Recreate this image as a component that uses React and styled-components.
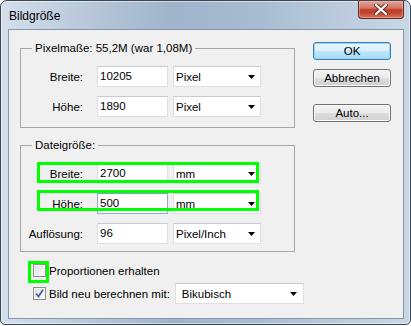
import React from "react";
import styled, { createGlobalStyle } from "styled-components";

const GlobalStyle = createGlobalStyle`
  html, body { margin: 0; padding: 0; background: #ffffff; }
  body { font-family: "Liberation Sans", Arial, sans-serif; font-size: 11.5px; color: #000; }
  * { box-sizing: border-box; }
`;

const Window = styled.div`
  width: 411px;
  height: 325px;
  border: 1px solid #3b4656;
  border-radius: 7px 7px 5px 5px;
  background: linear-gradient(90deg, #d3dfeb 0%, #bccbdc 18%, #9fb3ca 42%, #a7bbd1 62%, #bdcddd 85%, #c9d7e5 100%);
  box-shadow: inset 0 0 0 1px rgba(255, 255, 255, 0.5);
  display: flex;
  flex-direction: column;
  padding: 0 6px 5px 7px;
`;

const TitleBar = styled.div`
  height: 28px;
  display: flex;
  align-items: flex-start;
  justify-content: space-between;
`;

const Title = styled.div`
  padding: 8px 0 0 1px;
  font-size: 12px;
  line-height: 14px;
  color: #000;
`;

const CloseButton = styled.div`
  width: 46px;
  height: 18px;
  border: 1px solid #5c2a26;
  border-top: none;
  border-radius: 0 0 4px 4px;
  background: linear-gradient(180deg, #e3a597 0%, #d27462 42%, #bf3a2b 52%, #c4452f 72%, #d8775c 100%);
  box-shadow: inset 0 0 0 1px rgba(255, 190, 175, 0.5);
  display: flex;
  align-items: center;
  justify-content: center;
`;

const Client = styled.div`
  width: 396px;
  height: 290px;
  border: 1px solid #8496ab;
  background: #f0f0f0;
  display: flex;
`;

const LeftCol = styled.div`
  width: 286px;
  flex-shrink: 0;
  padding: 18px 0 0 11px;
  display: flex;
  flex-direction: column;
`;

const Group = styled.div`
  position: relative;
  width: 275px;
  border: 1px solid #a7a7a7;
  padding: 17px 0 ${(p) => p.$bottom}px 0;
  margin-top: ${(p) => p.$top}px;
  display: flex;
  flex-direction: column;
  gap: 9px;
`;

const Legend = styled.div`
  position: absolute;
  top: -8px;
  left: 11px;
  padding: 0 3px;
  background: #f0f0f0;
  line-height: 14px;
`;

const Row = styled.div`
  position: relative;
  display: flex;
  align-items: center;
  height: 21px;
`;

const Label = styled.div`
  width: 62px;
  margin-right: 14px;
  text-align: right;
  white-space: nowrap;
`;

const Field = styled.div`
  width: 71px;
  height: 21px;
  background: #fff;
  border: 1px solid ${(p) => (p.$focused ? "#8eaed3" : "#dcdfe4")};
  border-top-color: ${(p) => (p.$focused ? "#7f9fc6" : "#c8cbd0")};
  padding-left: 2px;
  line-height: 19px;
  margin-right: 5px;
`;

const Select = styled.div`
  width: ${(p) => p.$w}px;
  flex-shrink: 0;
  height: 21px;
  background: #fff;
  border: 1px solid #dcdfe4;
  border-top-color: #c8cbd0;
  display: flex;
  align-items: center;
  justify-content: space-between;
  padding: 0 ${(p) => p.$pr}px 0 ${(p) => p.$pl}px;
`;

const Highlight = styled.div`
  position: absolute;
  border: 3px solid #00ff00;
  pointer-events: none;
`;

const CheckRow = styled.div`
  display: flex;
  align-items: center;
  height: 21px;
  padding-left: 13px;
  margin-top: ${(p) => p.$top}px;
`;

const CheckWrap = styled.div`
  position: relative;
  flex-shrink: 0;
  width: 13px;
  height: 13px;
  margin-right: 3px;
`;

const Box = styled.div`
  width: 13px;
  height: 13px;
  border: 1px solid #8e8f8f;
  background: linear-gradient(135deg, #dcdcdc 0%, #f4f4f4 70%, #fdfdfd 100%);
  box-shadow: inset 0 0 0 1px #f4f4f4;
  display: flex;
  align-items: center;
  justify-content: center;
`;

const CheckText = styled.div`
  white-space: nowrap;
  flex-shrink: 0;
  margin-right: 5px;
`;

const RightCol = styled.div`
  margin-left: 18px;
  padding-top: 12px;
  display: flex;
  flex-direction: column;
`;

const Button = styled.div`
  width: 78px;
  height: 18px;
  margin-top: ${(p) => p.$top}px;
  border: 1px solid ${(p) => (p.$default ? "#3c7fb1" : "#707070")};
  border-radius: 3px;
  background: ${(p) =>
    p.$default
      ? "linear-gradient(180deg, #eaf6fd 0%, #d9f0fc 50%, #bee6fd 51%, #a7d9f5 100%)"
      : "linear-gradient(180deg, #f2f2f2 0%, #ebebeb 50%, #dddddd 51%, #cfcfcf 100%)"};
  box-shadow: inset 0 0 0 1px ${(p) => (p.$default ? "#94d6f7" : "#fcfcfc")};
  display: flex;
  align-items: center;
  justify-content: center;
  line-height: 14px;
`;

const Arrow = () => (
  <svg width="7" height="4" viewBox="0 0 7 4">
    <path d="M0 0 H7 L3.5 4 Z" fill="#000" />
  </svg>
);

const CloseX = () => (
  <svg width="14" height="11" viewBox="0 0 14 11">
    <path d="M2 1 L12 10 M12 1 L2 10" stroke="#6a2a22" strokeWidth="4" strokeLinecap="square" />
    <path d="M2 1 L12 10 M12 1 L2 10" stroke="#ffffff" strokeWidth="2.2" strokeLinecap="square" />
  </svg>
);

const CheckMark = () => (
  <svg width="9" height="9" viewBox="0 0 9 9">
    <path d="M1 4.5 L3.5 7.5 L8 0.8" fill="none" stroke="#4a5f97" strokeWidth="1.8" />
  </svg>
);

function FormRow({ label, value, unit, focused, highlight }) {
  return (
    <Row>
      <Label>{label}</Label>
      <Field $focused={focused}>{value}</Field>
      <Select $w={88} $pl={2} $pr={5}>
        <span>{unit}</span>
        <Arrow />
      </Select>
      {highlight && (
        <Highlight style={{ left: 16, top: highlight.top, width: 222, height: 21 }} />
      )}
    </Row>
  );
}

export default function App() {
  return (
    <>
      <GlobalStyle />
      <Window>
        <TitleBar>
          <Title>Bildgröße</Title>
          <CloseButton>
            <CloseX />
          </CloseButton>
        </TitleBar>
        <Client>
          <LeftCol>
            <Group $top={0} $bottom={10}>
              <Legend>Pixelmaße: 55,2M (war 1,08M)</Legend>
              <FormRow label="Breite:" value="10205" unit="Pixel" />
              <FormRow label="Höhe:" value="1890" unit="Pixel" />
            </Group>
            <Group $top={17} $bottom={7}>
              <Legend>Dateigröße:</Legend>
              <FormRow label="Breite:" value="2700" unit="mm" highlight={{ top: -1 }} />
              <FormRow label="Höhe:" value="500" unit="mm" focused highlight={{ top: -3 }} />
              <FormRow label="Auflösung:" value="96" unit="Pixel/Inch" />
            </Group>
            <CheckRow $top={8}>
              <CheckWrap>
                <Box />
                <Highlight style={{ left: -5, top: -3, width: 21, height: 22 }} />
              </CheckWrap>
              <CheckText>Proportionen erhalten</CheckText>
            </CheckRow>
            <CheckRow $top={2}>
              <CheckWrap>
                <Box>
                  <CheckMark />
                </Box>
              </CheckWrap>
              <CheckText>Bild neu berechnen mit:</CheckText>
              <Select $w={129} $pl={6} $pr={6}>
                <span>Bikubisch</span>
                <Arrow />
              </Select>
            </CheckRow>
          </LeftCol>
          <RightCol>
            <Button $default $top={0}>OK</Button>
            <Button $top={9}>Abbrechen</Button>
            <Button $top={17}>Auto...</Button>
          </RightCol>
        </Client>
      </Window>
    </>
  );
}
